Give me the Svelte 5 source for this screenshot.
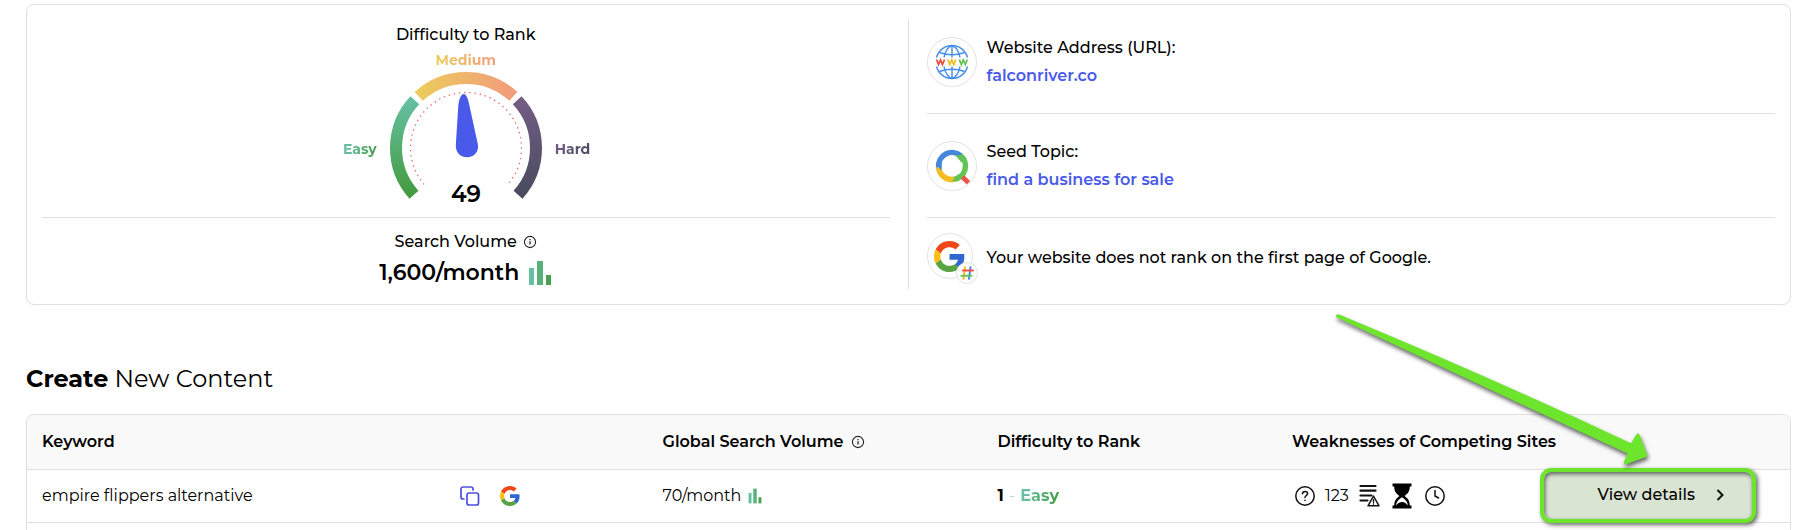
<script>
  const volume = '1,600/month';
  const score = 49;
  const rows = [{ keyword: 'empire flippers alternative', volume: '70/month', score: 1, level: 'Easy' }];

  // Angles are measured clockwise from the top of the dial.
  function arc(radius, from, to) {
    const point = (deg) => {
      const a = (deg * Math.PI) / 180;
      return `${(radius * Math.sin(a)).toFixed(2)} ${(-radius * Math.cos(a)).toFixed(2)}`;
    };
    return `M${point(from)}A${radius} ${radius} 0 ${to - from > 180 ? 1 : 0} 1 ${point(to)}`;
  }
</script>

{#snippet google(size)}
  <svg width={size} height={size} viewBox="0 0 48 48" aria-hidden="true">
    <path fill="#ef4719" d="M24 9.5c3.54 0 6.71 1.22 9.21 3.6l6.85-6.85C35.9 2.38 30.47 0 24 0 14.62 0 6.51 5.38 2.56 13.22l7.98 6.19C12.43 13.72 17.74 9.5 24 9.5z" />
    <path fill="#3068d0" d="M46.98 24.55c0-1.57-.15-3.09-.38-4.55H24v9.02h12.94c-.58 2.96-2.26 5.48-4.78 7.18l7.73 6c4.51-4.18 7.09-10.36 7.09-17.65z" />
    <path fill="#fdbd12" d="M10.53 28.59c-.48-1.45-.76-2.99-.76-4.59s.27-3.14.76-4.59l-7.98-6.19C.92 16.46 0 20.12 0 24c0 3.88.92 7.54 2.56 10.78l7.97-6.19z" />
    <path fill="#58a343" d="M24 48c6.48 0 11.93-2.13 15.89-5.81l-7.73-6c-2.15 1.45-4.92 2.3-8.16 2.3-6.26 0-11.57-4.22-13.47-9.91l-7.98 6.19C6.51 42.62 14.62 48 24 48z" />
  </svg>
{/snippet}

{#snippet info()}
  <svg width="14" height="14" viewBox="0 0 14 14" fill="none" stroke="#222" aria-hidden="true">
    <circle cx="7" cy="7" r="5.6" stroke-width="1.1" />
    <path d="M7 6.3v3.3M7 4v1.3" stroke-width="1.3" />
  </svg>
{/snippet}

{#snippet bars(width, height)}
  <svg {width} {height} viewBox="0 0 24 26" preserveAspectRatio="none" aria-hidden="true">
    <path fill="#66bfa0" d="M1 8h5v17H1z" />
    <path fill="#58b07a" d="M9 1h6v24H9z" />
    <path fill="#49a14d" d="M18 15h5v10h-5z" />
  </svg>
{/snippet}

<main>
  <section class="summary">
    <div class="metrics">
      <div class="difficulty">
        <h2>Difficulty to Rank</h2>
        <span class="level medium">Medium</span>
        <div class="dial">
          <span class="level easy">Easy</span>
          <svg width="152" height="138" viewBox="-76 -76 152 138" role="img" aria-label="Difficulty gauge">
            <defs>
              <linearGradient id="easy" x1="0" y1="0" x2="0" y2="1"><stop stop-color="#66bfa0" /><stop offset="1" stop-color="#439b40" /></linearGradient>
              <linearGradient id="medium"><stop stop-color="#eccb5c" /><stop offset="1" stop-color="#f29c7b" /></linearGradient>
              <linearGradient id="hard" x1="0" y1="0" x2="0" y2="1"><stop stop-color="#725c84" /><stop offset="1" stop-color="#484c60" /></linearGradient>
            </defs>
            <g fill="none" stroke-width="12">
              <path d={arc(70, -132, -47)} stroke="url(#easy)" />
              <path d={arc(70, -42.5, 42.5)} stroke="url(#medium)" />
              <path d={arc(70, 47, 132)} stroke="url(#hard)" />
            </g>
            <path d={arc(55.5, -131, 131)} fill="none" stroke="#f0686c" stroke-width="1.3" stroke-dasharray="1.4 3.8" />
            <path fill="#4959e9" d="M-2.300-54C0.500-54 2.500-48 3.500-42L11.800-4C13.300 4 8 9.200 1 9.200S-10.500 4-10.200-3L-7.800-41C-7-49-5-54-2.300-54z" />
            <text x="0" y="54" text-anchor="middle">{score}</text>
          </svg>
          <span class="level hard">Hard</span>
        </div>
      </div>
      <div class="volume">
        <h2>Search Volume {@render info()}</h2>
        <strong>{volume} {@render bars(24, 26)}</strong>
      </div>
    </div>

    <div class="facts">
      <div class="fact">
        <span class="badge">
          <svg width="36" height="36" viewBox="-18 -18 36 36" fill="none" stroke="#458ce8" stroke-width="1.4" aria-hidden="true">
            <path d="M-15.500-4.500A16 16 0 0 1 15.500-4.500M-15.500 4.500A16 16 0 0 0 15.500 4.500" />
            <path d="M-8-4.500C-7-11-3.500-16 0-16S7-11 8-4.500M-8 4.500C-7 11-3.500 16 0 16S7 11 8 4.500M0-16V-4.500M0 16V4.500" />
            <path d="M-12.500-9.500Q0-5 12.500-9.500M-12.500 9.500Q0 5 12.500 9.500" />
            <g stroke-width="1.8">
              <path stroke="#e5503f" d="M-15.500-2.500l2 5 2-4.500 2 4.500 2-5" />
              <path stroke="#f2bd20" d="M-4.200-2.500l2 5 2-4.500 2 4.500 2-5" />
              <path stroke="#62c455" d="M7.300-2.500l2 5 2-4.500 2 4.500 2-5" />
            </g>
          </svg>
        </span>
        <div><p>Website Address (URL):</p><a href="#site">falconriver.co</a></div>
      </div>
      <div class="fact">
        <span class="badge">
          <svg width="38" height="38" viewBox="-19 -19 38 38" fill="none" stroke-width="5.500" aria-hidden="true">
            <path stroke="#4487dc" d={arc(13.5, -97, 42)} />
            <path stroke="#62c455" d={arc(13.5, 38, 172)} />
            <path stroke="#f2bd20" d={arc(13.5, 170, 265)} />
            <path fill="#4487dc" d="M-16.200-1.500L-10.500 4.500-10-4z" />
            <path fill="#62c455" d="M3-11L12.500-10 10-3z" />
            <path fill="#62c455" d="M-.500 16L6 8 10 12z" />
            <path stroke="#ea5546" stroke-width="4.800" d="M10.500 11l6 5.800" />
          </svg>
        </span>
        <div><p>Seed Topic:</p><a href="#topic">find a business for sale</a></div>
      </div>
      <div class="fact last">
        <span class="badge ranked">
          {@render google(31)}
          <span class="hash">
            <svg width="14" height="14" viewBox="0 0 14 14" fill="none" stroke-width="2" stroke-linecap="round" aria-hidden="true">
              <path stroke="#f2bd20" d="M5 1.200L3.500 12.800" />
              <path stroke="#4487ec" d="M10.500 1.200L9 12.800" />
              <path stroke="#ea5546" d="M3 4.500h10" />
              <path stroke="#62c455" d="M1.500 9.800h10" />
            </svg>
          </span>
        </span>
        <p>Your website does not rank on the first page of Google.</p>
      </div>
    </div>
  </section>

  <h1><b>Create</b> New Content</h1>

  <table>
    <colgroup>
      <col class="c-keyword" /><col class="c-actions" /><col class="c-volume" /><col class="c-difficulty" /><col class="c-weak" /><col />
    </colgroup>
    <thead>
      <tr>
        <th colspan="2">Keyword</th>
        <th><span class="line">Global Search Volume {@render info()}</span></th>
        <th>Difficulty to Rank</th>
        <th colspan="2">Weaknesses of Competing Sites</th>
      </tr>
    </thead>
    <tbody>
      {#each rows as row}
        <tr>
          <td>{row.keyword}</td>
          <td>
            <div class="actions">
              <button class="icon" aria-label="Copy keyword">
                <svg width="20" height="20" viewBox="0 0 20 20" fill="none" stroke="#4b4fe0" stroke-width="1.700" stroke-linejoin="round" stroke-linecap="round" aria-hidden="true">
                  <rect x="7" y="7" width="11.500" height="12" rx="2" />
                  <path d="M4 13H3a2 2 0 0 1-2-2V3a2 2 0 0 1 2-2h8a2 2 0 0 1 2 2v1" />
                </svg>
              </button>
              <button class="icon" aria-label="Search on Google">{@render google(20)}</button>
            </div>
          </td>
          <td><span class="line">{row.volume} {@render bars(14, 16)}</span></td>
          <td><b>{row.score}</b> <span class="dash">-</span> <span class="level easy">{row.level}</span></td>
          <td>
            <div class="weak">
              <svg width="20" height="20" viewBox="0 0 20 20" fill="none" stroke="#111" stroke-width="1.500" stroke-linecap="round" aria-hidden="true">
                <circle cx="10" cy="10" r="9.200" />
                <path d="M7.500 7.800C7.600 6.200 8.700 5.400 10 5.400s2.600.9 2.600 2.200c0 1.800-2.600 2-2.600 3.900M10 14.200v.2" />
              </svg>
              <span>123</span>
              <svg width="22" height="26" viewBox="0 0 22 26" fill="none" stroke="#111" stroke-width="2.200" stroke-linecap="round" stroke-linejoin="round" aria-hidden="true">
                <path d="M1.500 3h15M1.500 7.700h15M1.500 12.500h11M1.500 17.500h7" />
                <path fill="#fff" stroke-width="1.500" d="M14.500 13L9 22.800h11z" />
                <path stroke-width="1.300" d="M14.500 16.500v3M14.500 21v.2" />
              </svg>
              <svg width="22" height="26" viewBox="0 0 22 26" aria-hidden="true">
                <path d="M1.500.5h19v3h-1.700c0 5-2.300 7.400-5.300 9.500 3 2.100 5.300 4.500 5.300 9.500h1.700v3h-19v-3h1.700c0-5 2.300-7.400 5.300-9.500-3-2.100-5.300-4.500-5.300-9.500H1.500z" />
                <path fill="#fff" d="M5.200 22.500c.2-4 2.600-6 5.800-8.200 3.200 2.200 5.600 4.200 5.800 8.200-1.400-2-3.300-3.200-5.800-3.400-2.500.2-4.400 1.400-5.800 3.400z" />
              </svg>
              <svg width="22" height="20" viewBox="0 0 22 20" fill="none" stroke="#111" stroke-width="1.500" stroke-linecap="round" stroke-linejoin="round" aria-hidden="true">
                <circle cx="12" cy="10" r="9.200" />
                <path d="M12 4.500V10l3.600 2" />
              </svg>
            </div>
          </td>
          <td class="details">
            <div class="callout">
              <button class="view">
                View details
                <svg width="8" height="12" viewBox="0 0 8 12" fill="none" stroke="#111" stroke-width="2" aria-hidden="true"><path d="M1.500 1L6.500 6l-5 5" /></svg>
              </button>
              <svg class="arrow" width="330" height="165" viewBox="0 0 330 165" aria-hidden="true">
                <path d="M8.500 7.300Q5 7.500 6 10Q160 83 297.500 146.500L293.800 155Q293.500 158 296 157.300L316 150Q318 149 317 147L309.500 127.500Q307.500 125.500 306 128L301 136.300Q160 70 8.500 7.300Z" />
              </svg>
            </div>
          </td>
        </tr>
      {/each}
      <tr><td colspan="6"></td></tr>
    </tbody>
  </table>
</main>

<style>
  :global(body) {
    margin: 0;
    background: #fff;
  }
  main {
    box-sizing: border-box;
    height: 100vh;
    overflow: hidden;
    padding: 4px 29px 0 26px;
    color: #000;
    font: 400 16px/24px Montserrat, Inter, sans-serif;
  }
  h1, h2, p {
    margin: 0;
  }
  svg {
    display: block;
    flex: none;
  }
  button {
    font: inherit;
    color: inherit;
    cursor: pointer;
  }
  .summary {
    display: grid;
    grid-template-columns: 1fr 1fr;
    border: 1px solid #dfdfdf;
    border-radius: 8px;
    padding: 15px;
  }
  .metrics {
    padding-right: 18px;
    border-right: 1px solid #dfdfdf;
  }
  .difficulty {
    display: flex;
    flex-direction: column;
    align-items: center;
    height: 197px;
    border-bottom: 1px solid #dfdfdf;
  }
  h2 {
    display: flex;
    align-items: center;
    gap: 6px;
    padding-top: 3px;
    font-size: 16px;
    font-weight: 500;
  }
  .level {
    font-size: 14px;
    font-weight: 700;
    color: transparent;
    background-clip: text;
    -webkit-background-clip: text;
  }
  .easy {
    background-image: linear-gradient(100deg, #66bfa0 20%, #439b40);
  }
  .medium {
    margin-top: 1px;
    background-image: linear-gradient(90deg, #eccb5c, #f29c7b);
  }
  .hard {
    background-image: linear-gradient(100deg, #725c84, #484c60);
  }
  .dial {
    display: grid;
    grid-template-columns: 36px auto 36px;
    align-items: center;
    gap: 13px;
  }
  .dial .level {
    margin-top: 16px;
  }
  .dial .easy {
    text-align: right;
  }
  .dial text {
    font-size: 23px;
    font-weight: 600;
  }
  .volume {
    display: flex;
    flex-direction: column;
    align-items: center;
    padding-top: 9px;
  }
  .volume strong {
    display: flex;
    align-items: center;
    gap: 9px;
    margin-top: 3px;
    font-size: 22px;
    line-height: 32px;
    font-weight: 600;
  }
  .facts {
    display: grid;
    grid-template-rows: 94px 104px 70px;
    padding-left: 18px;
  }
  .fact {
    display: flex;
    align-items: center;
    gap: 10px;
    border-bottom: 1px solid #dfdfdf;
    line-height: 28px;
    font-weight: 500;
  }
  .fact:first-child {
    padding-bottom: 10px;
  }
  .fact.last {
    border: 0;
    padding-top: 10px;
  }
  .fact a {
    color: #4959e9;
    font-weight: 600;
    text-decoration: none;
  }
  .badge {
    position: relative;
    display: grid;
    place-items: center;
    flex: none;
    box-sizing: border-box;
    width: 50px;
    height: 50px;
    border: 1px solid #e2e2e2;
    border-radius: 50%;
  }
  .ranked {
    width: 46px;
    height: 46px;
    margin: 0 4px 4px 0;
  }
  .hash {
    position: absolute;
    right: -6px;
    bottom: -6px;
    display: grid;
    place-items: center;
    width: 20px;
    height: 20px;
    border: 1px solid #e2e2e2;
    border-radius: 50%;
    background: #fff;
  }
  h1 {
    padding: 58px 0 19px;
    font-size: 24px;
    line-height: 32px;
    font-weight: 400;
  }
  table {
    width: 100%;
    table-layout: fixed;
    border: 1px solid #dfdfdf;
    border-radius: 8px;
    border-spacing: 0;
  }
  .c-keyword { width: 23.7%; }
  .c-actions { width: 11.5%; }
  .c-volume { width: 19%; }
  .c-difficulty { width: 16.7%; }
  .c-weak { width: 14.9%; }
  th, td {
    box-sizing: border-box;
    height: 53px;
    padding: 0 15px;
    border-bottom: 1px solid #dfdfdf;
    text-align: left;
    white-space: nowrap;
  }
  th {
    height: 55px;
    background: #f9f9f9;
    font-weight: 600;
  }
  th:first-child {
    border-top-left-radius: 8px;
  }
  th:last-child {
    border-top-right-radius: 8px;
  }
  td .level {
    font-size: 16px;
  }
  td b {
    font-weight: 700;
  }
  .dash {
    margin: 0 1px;
    color: #ccc;
  }
  .line {
    display: flex;
    align-items: center;
    gap: 7px;
  }
  .actions {
    display: flex;
    gap: 20px;
  }
  .icon {
    padding: 0;
    border: 0;
    background: none;
  }
  .weak {
    display: flex;
    align-items: center;
    gap: 10px;
    padding-left: 3px;
  }
  td.details {
    padding: 0 34px 0 0;
  }
  .callout {
    position: relative;
    margin: -4px 0 -2px;
  }
  .view {
    display: flex;
    align-items: center;
    justify-content: flex-end;
    gap: 21px;
    box-sizing: border-box;
    width: 100%;
    height: 55px;
    padding: 0 28px;
    border: 4px solid #6ee52d;
    border-radius: 11px;
    background: #d9e5d2;
    font-weight: 500;
    box-shadow: 2px 2px 4px #0009, inset 1px 2px 4px #0009;
  }
  .arrow {
    position: absolute;
    right: 96px;
    bottom: 51px;
    fill: #6ee52d;
    filter: drop-shadow(1px 3px 2px #0009);
    pointer-events: none;
  }
</style>
